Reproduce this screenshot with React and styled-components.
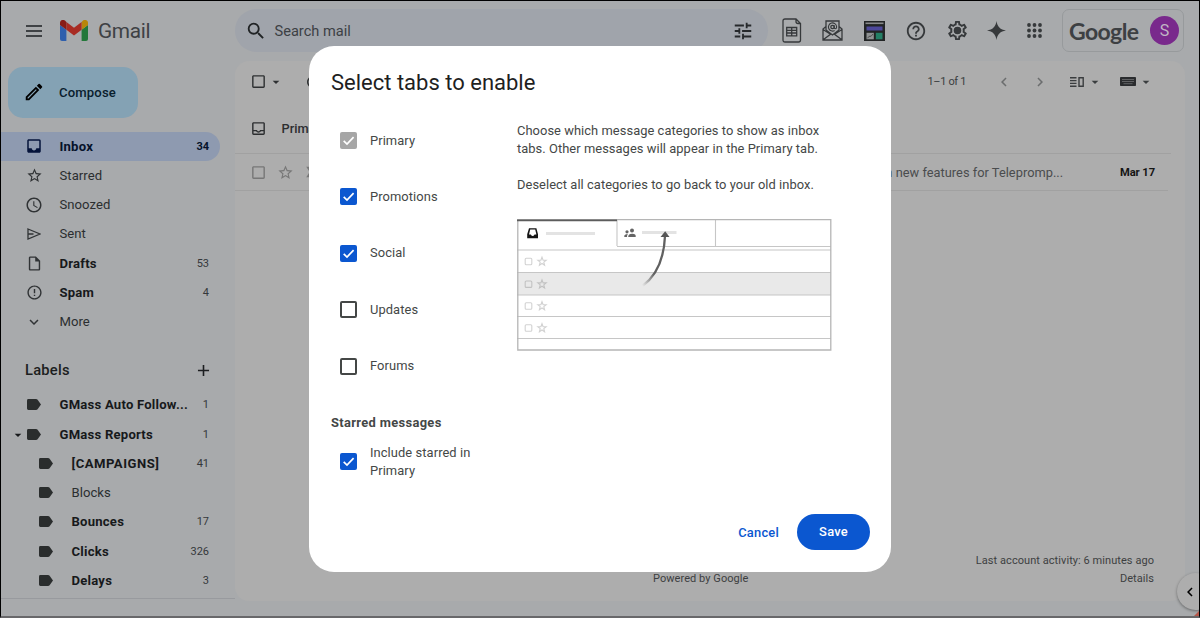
import React from "react";
import styled, { createGlobalStyle, css } from "styled-components";
import {
  MdInbox, MdStarBorder, MdSchedule, MdOutlineInsertDriveFile, MdErrorOutline, MdExpandMore, MdAdd,
  MdSearch, MdTune, MdHelpOutline, MdOutlineInbox, MdCheckBoxOutlineBlank, MdArrowDropDown,
  MdChevronLeft, MdChevronRight, MdOutlineModeEdit, MdOutlineSettings, MdRefresh, MdLabelImportantOutline,
} from "react-icons/md";

const Global = createGlobalStyle`
  * { box-sizing: border-box; }
  body { margin: 0; background: #a8abad; font-family: Roboto, "Liberation Sans", sans-serif; color: #2c2e30; }
  svg { display: block; flex: none; }
`;

const Window = styled.div`
  position: relative;
  width: 1200px;
  height: 618px;
  overflow: hidden;
  display: flex;
  flex-direction: column;
  background: #a8aaac;
  border: 1px solid #000;
  border-bottom: 2px solid #68686a;
`;

const Header = styled.header`
  flex: none;
  height: 60px;
  display: flex;
  align-items: center;
  padding: 0 15px 1px 25px;
`;

const MenuLines = styled.div`
  width: 16px;
  height: 12px;
  display: flex;
  flex-direction: column;
  justify-content: space-between;
  &::before, &::after { content: ""; }
  &::before, &::after, i { height: 2px; background: #3f4245; }
`;
const Brand = styled.div`
  display: flex;
  align-items: center;
  gap: 10px;
  width: 175px;
  margin-left: 18px;
  font-size: 20.8px;
  letter-spacing: -0.3px;
  color: #3e4144;
`;
const SearchBar = styled.div`
  width: 533px;
  height: 43px;
  border-radius: 22px;
  background: #a0a4ab;
  display: flex;
  align-items: center;
  padding: 0 14px 0 10px;
  font-size: 14.6px;
  color: #3c4044;
  span { flex: 1; margin-left: 7.5px; }
`;
const HeaderTools = styled.div`
  flex: 1;
  display: flex;
  align-items: center;
  gap: 20.5px;
  padding-left: 13.5px;
  color: #36393b;
  svg:nth-child(4), svg:nth-child(5) { margin-right: -2px; }
`;
const AccountBox = styled.div`
  width: 122px;
  height: 43px;
  border: 1px solid #979a9c;
  border-radius: 7px;
  display: flex;
  align-items: center;
  justify-content: space-between;
  padding: 0 4px 0 6px;
  color: #3d4043;
  font: 700 23px/30px Lato, sans-serif;
  letter-spacing: -0.6px;
`;
const Avatar = styled.div`
  width: 29px;
  height: 29px;
  border-radius: 50%;
  background: #79298c;
  color: #c0b6c4;
  font: 400 16px/29px Roboto, sans-serif;
  letter-spacing: 0;
  text-align: center;
`;

const Body = styled.div`
  flex: 1;
  display: flex;
  min-height: 0;
`;

const Sidebar = styled.nav`
  width: 234px;
  height: 538px;
  flex: none;
  border-bottom: 1px solid #989a9e;
  padding-top: 6px;
`;
const Compose = styled.div`
  width: 130px;
  height: 51px;
  margin: 0 0 13.5px 7px;
  border-radius: 15px;
  background: #84a2b4;
  display: flex;
  align-items: center;
  padding: 0 0 1px 15px;
  gap: 14px;
  font-size: 13.1px;
  font-weight: 500;
  letter-spacing: 0.15px;
  color: #09202e;
`;
const NavRow = styled.div`
  height: 29.25px;
  width: 219px;
  display: flex;
  align-items: center;
  padding: 0 11px 0 ${(p) => (p.$nested ? 35 : 23)}px;
  border-radius: 0 15px 15px 0;
  font-size: 13.1px;
  letter-spacing: 0.05px;
  color: #2b2e30;
  position: relative;
  ${(p) => p.$bold && css`font-weight: 700; color: #17191b; letter-spacing: 0.22px;`}
  ${(p) => p.$active && css`background: #8e9ab0; color: #06122a;`}
`;
const NavIcon = styled.span`
  width: 20px;
  display: flex;
  justify-content: center;
  margin-right: 15.5px;
  color: #303335;
`;
const NavLabel = styled.span`
  flex: 1;
  white-space: nowrap;
  ${(p) => p.$caps && css`letter-spacing: 0.5px;`}
`;
const Count = styled.span`
  font-size: 11px;
  font-weight: ${(p) => (p.$bold ? 700 : 400)};
  letter-spacing: 0;
  color: ${(p) => (p.$bold ? "#06122a" : "#35383b")};
`;
const Expander = styled.span`
  position: absolute;
  left: 9px;
  top: 7px;
`;
const LabelsHead = styled.div`
  height: 54px;
  display: flex;
  align-items: center;
  justify-content: space-between;
  padding: 14px 22px 0 24px;
  font-size: 14.7px;
  font-weight: 500;
  letter-spacing: 0.25px;
  color: #1c1e20;
`;

const Main = styled.main`
  width: 950px;
  height: 540px;
  background: #adadad;
  border-radius: 14px;
  display: flex;
  flex-direction: column;
  font-size: 13px;
`;
const Toolbar = styled.div`
  height: 39px;
  display: flex;
  align-items: center;
  padding: 2px 31px 0 15px;
  color: #2e3032;
`;
const Pager = styled.div`
  margin-left: auto;
  display: flex;
  align-items: center;
  font-size: 11px;
  letter-spacing: -0.35px;
  color: #3a3d3f;
`;
const Gap = styled.i`width: ${(p) => p.$w}px; flex: none;`;
const TabRow = styled.div`
  height: 54px;
  display: flex;
  align-items: center;
  gap: 14.5px;
  padding: 3px 0 0 15px;
  width: 936px;
  border-bottom: 1px solid #a1a1a1;
  font-size: 12.8px;
  font-weight: 500;
`;
const MailRow = styled.div`
  height: 37px;
  display: flex;
  align-items: center;
  padding: 0 13px 0 15px;
  width: 933px;
  border-bottom: 1px solid #a1a1a1;
  color: #777;
`;
const Snippet = styled.span`
  margin-left: auto;
  width: 242px;
  white-space: nowrap;
  font-size: 12.8px;
  letter-spacing: 0.03px;
  color: #4a4c4e;
`;
const MailDate = styled.span`
  font-size: 11.2px;
  font-weight: 700;
  letter-spacing: -0.08px;
  color: #151515;
  width: 35px;
  white-space: nowrap;
`;
const Footer = styled.footer`
  margin-top: auto;
  display: flex;
  align-items: flex-end;
  justify-content: space-between;
  padding: 0 31px 13px 418px;
  font-size: 11px;
  line-height: 18px;
  letter-spacing: 0.06px;
  color: #3d3f41;
`;
const Activity = styled.div`text-align: right;`;
const PanelToggle = styled.div`
  position: absolute;
  left: 1176px;
  top: 572px;
  width: 37px;
  height: 37px;
  border-radius: 50%;
  background: #adadad;
  box-shadow: 0 1px 3px rgba(0, 0, 0, 0.4);
  display: flex;
  align-items: center;
  padding-left: 4px;
  color: #000;
`;
const Corner = styled.i`
  position: absolute;
  right: 0;
  bottom: 0;
  border-left: 5px solid transparent;
  border-bottom: 5px solid #b4574a;
`;

const Dialog = styled.section`
  position: absolute;
  left: 308px;
  top: 45px;
  width: 582px;
  height: 526px;
  border-radius: 25px;
  background: #fff;
  padding: 22px 21px 22px 22px;
  display: flex;
  flex-direction: column;
  color: #444746;
  font-size: 12.9px;
`;
const Title = styled.h1`
  margin: 0;
  font-size: 22px;
  line-height: 30px;
  font-weight: 400;
  color: #1f1f1f;
`;
const Columns = styled.div`display: flex;`;
const Options = styled.div`
  width: 186px;
  padding-top: 14.4px;
`;
const Option = styled.label`
  height: ${(p) => p.$h || 56.4}px;
  display: flex;
  align-items: center;
  gap: 13px;
  padding-left: 9px;
  line-height: 18px;
  letter-spacing: 0.08px;
`;
const Box = styled.span`
  flex: none;
  width: 17px;
  height: 17px;
  border-radius: 2px;
  background: ${(p) => (p.$state === "off" ? "#fff" : p.$state === "locked" ? "#a6a6a6" : "#0b57d0")};
  border: ${(p) => (p.$state === "off" ? "2px solid #444746" : "0")};
`;
const GroupTitle = styled.div`
  font-weight: 700;
  line-height: 20px;
  margin: 18.4px 0 11px;
  letter-spacing: 0.34px;
  white-space: nowrap;
`;
const Explain = styled.div`
  width: 316px;
  padding-top: 23.5px;
  p { margin: 0 0 18.5px; line-height: 18px; letter-spacing: 0.05px; white-space: nowrap; }
  p:nth-of-type(2) { margin-bottom: 24.5px; }
`;
const Actions = styled.div`
  margin-top: auto;
  display: flex;
  align-items: center;
  justify-content: flex-end;
  gap: 18px;
  font-weight: 500;
  color: #0b57d0;
  letter-spacing: 0.22px;
`;
const SaveButton = styled.span`
  width: 73px;
  height: 36px;
  border-radius: 18px;
  background: #0b57d0;
  color: #fff;
  text-align: center;
  line-height: 36px;
`;

const GmailLogo = () => (
  <svg width="28" height="21" viewBox="0 0 28 21">
    <path d="M0 5v14q0 2 2 2h4.4V9.800z" fill="#2e5fad" />
    <path d="M21.600 21H26q2 0 2-2V5l-6.400 4.800z" fill="#23783a" />
    <path d="M21.600 2v7.800L28 5V2.800c0-2.600-3-3.800-5-2.300z" fill="#b8860b" />
    <path d="M6.400 9.800V2L14 7.700 21.600 2v7.800L14 15.500z" fill="#a82c24" />
    <path d="M0 2.800V5l6.400 4.800V2L5 .6C3-.9 0 .2 0 2.800z" fill="#881c17" />
  </svg>
);
const SheetIcon = () => (
  <svg width="20" height="25" viewBox="0 0 20 25" fill="none" stroke="currentColor" strokeWidth="1.3">
    <path d="M3 1h11l4.500 4.500v16.500q0 2-2 2H3q-2 0-2-2V3q0-2 2-2zM14 1v2.500q0 2 2 2h2.500" />
    <path d="M4.700 9.500h10v8.300h-10zM9.700 9.500v8.300M4.700 12.300h10M4.700 15h10" />
  </svg>
);
const MailAtIcon = () => (
  <svg width="21" height="21" viewBox="0 0 21 21" fill="none" stroke="currentColor" strokeWidth="1.3">
    <path d="M4 10V1h13v9M4 6.500 1 9v11h19V9l-3-2.500M1 9.500l7.500 4.700L1.500 19.500M20 9.500l-7.500 4.700 7 5.300M4 10l6.500 5 6.500-5" />
    <circle cx="10.500" cy="7" r="1.700" />
    <path d="M12.200 5.300v2q0 1.400 1.200 1.400 1.400-.2 1.200-2.200a4.100 4.100 0 1 0-2 4" strokeWidth="1.100" />
  </svg>
);
const DashIcon = () => (
  <svg width="21" height="20" viewBox="0 0 21 20">
    <rect width="21" height="20" fill="#222425" />
    <path d="M1.500 1.500h18v1.600h-18z" fill="#888a8c" />
    <path d="M2.500 5.500h16v4h-16z" fill="#4d489b" />
    <path d="M2.500 11.800h7.300v6.500H2.500z" fill="#8f9293" />
    <path d="M3.500 16.800 6 15l1 .4 2-2.400" stroke="#444" fill="none" strokeWidth=".9" />
    <path d="M11.800 11.800h6.700v6.500h-6.700z" fill="#237f65" />
  </svg>
);
const SparkIcon = () => (
  <svg width="19" height="19" viewBox="0 0 20 20" fill="currentColor">
    <path d="M10 0c.8 6 4 9.200 10 10-6 .8-9.200 4-10 10-.8-6-4-9.200-10-10 6-.8 9.200-4 10-10z" />
  </svg>
);
const GearIcon = () => (
  <svg width="23" height="23" viewBox="0 0 24 24">
    <MdOutlineSettings size={24} />
    <circle cx="12" cy="12" r="3.600" fill="currentColor" />
  </svg>
);
const DotsIcon = () => (
  <svg width="15" height="15" viewBox="0 0 15 15" fill="currentColor">
    {[2, 7.5, 13].map((y) => [2, 7.5, 13].map((x) => <circle key={`${x}-${y}`} cx={x} cy={y} r="1.9" />))}
  </svg>
);
const SendIcon = () => (
  <svg width="14" height="12" viewBox="0 0 14 12" fill="none" stroke="currentColor" strokeWidth="1.300">
    <path d="M1 1l12 5-12 5zM1 6h5.500" />
  </svg>
);
const TagIcon = () => (
  <svg width="14" height="11" viewBox="0 0 14 11" fill="#2a2d2d">
    <path d="M1.400 0H9q1 0 1.600.8L14 5.500l-3.400 4.700q-.6.8-1.600.8H1.400Q0 11 0 9.600V1.400Q0 0 1.400 0z" />
  </svg>
);
const SplitIcon = () => (
  <svg width="15" height="10" viewBox="0 0 15 10" fill="none" stroke="currentColor" strokeWidth="1.400">
    <path d="M0 .8h6.500M0 3.600h6.500M0 6.400h6.500M0 9.200h6.500M9 .8h4.200v8.400H9z" />
  </svg>
);
const KeyboardIcon = () => (
  <svg width="16" height="9" viewBox="0 0 16 9">
    <rect width="16" height="9" rx=".8" fill="#2a2c2e" />
    <path d="M2 2.500h12M2 4.500h12M3.500 6.700h9" stroke="#66686a" strokeWidth=".9" />
  </svg>
);
const Tick = () => (
  <svg width="17" height="17" viewBox="0 0 17 17" fill="none" stroke="#fff" strokeWidth="1.700">
    <path d="M3.700 8.800 7 12l6.600-6.800" />
  </svg>
);

const starPath = "M0-4.300 1.100-1.300 4.200-1.300 1.800.7 2.600 3.800 0 2-2.600 3.800-1.800.7-4.200-1.300-1.100-1.300z";
const TabsIllustration = () => (
  <svg width="315" height="132" viewBox="0 0 315 132">
    <defs>
      <linearGradient id="tail" x1="0" y1="1" x2=".5" y2="0">
        <stop offset="0" stopColor="#666" stopOpacity="0" />
        <stop offset=".4" stopColor="#606060" />
      </linearGradient>
    </defs>
    <path d="M0 53.500h314v22.500H0z" fill="#e9e9e9" />
    <path d="M100 27.500h214M0 31h314M0 53.500h314M0 76h314M0 97.500h314M0 119.500h314M198.500 1v26M100 1v26" stroke="#c6c6c6" strokeWidth="1.100" fill="none" />
    <path d="M.8.500h313v130.500H.8z" fill="none" stroke="#b5b5b5" strokeWidth="1.300" />
    <path d="M0 1.300h100" stroke="#5c5c5c" strokeWidth="1.800" />
    <path fillRule="evenodd" d="M12 9.200h7.400l1.600 6v4H10.200v-4zM13.200 10.400l-1.200 5h1.800q1.900 3 3.800 0h1.800l-1.200-5z" fill="#151515" />
    <path d="M29 14.500h49M125 13.500h34.500" stroke="#e3e3e3" strokeWidth="3.200" />
    <g fill="#646464">
      <circle cx="110" cy="12.800" r="1.600" /><circle cx="115" cy="11.500" r="2" />
      <path d="M107.300 18v-1.500q1-1.700 3.500-1.500-.8 1-.8 3zM111.200 18q0-3.200 4-3.200t3.500 3.200z" />
    </g>
    {[42.5, 65.2, 87, 109].map((y) => (
      <g key={y} fill="none" stroke={y === 65.2 ? "#c2c2c2" : "#d2d2d2"} strokeWidth="1.100">
        <rect x="8.200" y={y - 3.2} width="6.600" height="6.400" rx="1" />
        <path d={starPath} transform={`translate(25 ${y})`} />
      </g>
    ))}
    <path d="M125.500 67C139 57 147 40 148 17" fill="none" stroke="url(#tail)" strokeWidth="2.300" />
    <path d="M143.500 18 148.200 12.300 152.500 18z" fill="#555" />
  </svg>
);

const folders = [
  { label: "Inbox", icon: <MdInbox size={18} color="#04133a" />, count: 34, bold: true, active: true },
  { label: "Starred", icon: <MdStarBorder size={17} /> },
  { label: "Snoozed", icon: <MdSchedule size={18} /> },
  { label: "Sent", icon: <SendIcon /> },
  { label: "Drafts", icon: <MdOutlineInsertDriveFile size={17} />, count: 53, bold: true },
  { label: "Spam", icon: <MdErrorOutline size={17} />, count: 4, bold: true },
  { label: "More", icon: <MdExpandMore size={18} /> },
];
const labels = [
  { label: "GMass Auto Follow...", count: 1, bold: true },
  { label: "GMass Reports", count: 1, bold: true, open: true },
  { label: "[CAMPAIGNS]", count: 41, bold: true, nested: true, caps: true },
  { label: "Blocks", nested: true },
  { label: "Bounces", count: 17, bold: true, nested: true },
  { label: "Clicks", count: 326, bold: true, nested: true },
  { label: "Delays", count: 3, bold: true, nested: true },
];
const tabs = [
  ["Primary", "locked"],
  ["Promotions", "on"],
  ["Social", "on"],
  ["Updates", "off"],
  ["Forums", "off"],
];

const NavItem = ({ item }) => (
  <NavRow $bold={item.bold} $active={item.active} $nested={item.nested}>
    {item.open && <Expander><MdArrowDropDown size={16} /></Expander>}
    <NavIcon>{item.icon || <TagIcon />}</NavIcon>
    <NavLabel $caps={item.caps}>{item.label}</NavLabel>
    <Count $bold={item.active}>{item.count}</Count>
  </NavRow>
);

const Check = ({ state }) => <Box $state={state}>{state !== "off" && <Tick />}</Box>;

export default function App() {
  return (
    <Window>
      <Global />
      <Header>
        <MenuLines><i /></MenuLines>
        <Brand><GmailLogo />Gmail</Brand>
        <SearchBar>
          <MdSearch size={22} color="#202325" />
          <span>Search mail</span>
          <MdTune size={22} color="#26292c" />
        </SearchBar>
        <HeaderTools>
          <SheetIcon />
          <MailAtIcon />
          <DashIcon />
          <MdHelpOutline size={22} />
          <GearIcon />
          <SparkIcon />
          <DotsIcon />
        </HeaderTools>
        <AccountBox>Google<Avatar>S</Avatar></AccountBox>
      </Header>
      <Body>
        <Sidebar>
          <Compose><MdOutlineModeEdit size={22} color="#000" />Compose</Compose>
          {folders.map((f) => <NavItem key={f.label} item={f} />)}
          <LabelsHead>Labels<MdAdd size={19} /></LabelsHead>
          {labels.map((l) => <NavItem key={l.label} item={l} />)}
        </Sidebar>
        <Main>
          <Toolbar>
            <MdCheckBoxOutlineBlank size={17} />
            <Gap $w={1} />
            <MdArrowDropDown size={16} />
            <Gap $w={20} />
            <MdRefresh size={18} />
            <Pager>
              1–1 of 1
              <Gap $w={29} />
              <MdChevronLeft size={18} color="#6b6d6e" />
              <Gap $w={18} />
              <MdChevronRight size={18} color="#6b6d6e" />
              <Gap $w={20.5} />
              <SplitIcon />
              <Gap $w={2.5} />
              <MdArrowDropDown size={16} />
              <Gap $w={17} />
              <KeyboardIcon />
              <Gap $w={2} />
              <MdArrowDropDown size={16} />
            </Pager>
          </Toolbar>
          <TabRow><MdOutlineInbox size={17} />Primary</TabRow>
          <MailRow>
            <MdCheckBoxOutlineBlank size={17} />
            <Gap $w={10} />
            <MdStarBorder size={17} />
            <Gap $w={10} />
            <MdLabelImportantOutline size={18} />
            <Snippet>on new features for Telepromp...</Snippet>
            <MailDate>Mar 17</MailDate>
          </MailRow>
          <Footer>
            <span>Powered by Google</span>
            <Activity>Last account activity: 6 minutes ago<br />Details</Activity>
          </Footer>
        </Main>
      </Body>
      <PanelToggle><MdChevronLeft size={18} /></PanelToggle>
      <Corner />
      <Dialog>
        <Title>Select tabs to enable</Title>
        <Columns>
          <Options>
            {tabs.map(([name, state]) => (
              <Option key={name}><Check state={state} />{name}</Option>
            ))}
            <GroupTitle>Starred messages</GroupTitle>
            <Option $h={36}><Check state="on" /><span>Include starred in<br />Primary</span></Option>
          </Options>
          <Explain>
            <p>Choose which message categories to show as inbox<br />tabs. Other messages will appear in the Primary tab.</p>
            <p>Deselect all categories to go back to your old inbox.</p>
            <TabsIllustration />
          </Explain>
        </Columns>
        <Actions>Cancel<SaveButton>Save</SaveButton></Actions>
      </Dialog>
    </Window>
  );
}
